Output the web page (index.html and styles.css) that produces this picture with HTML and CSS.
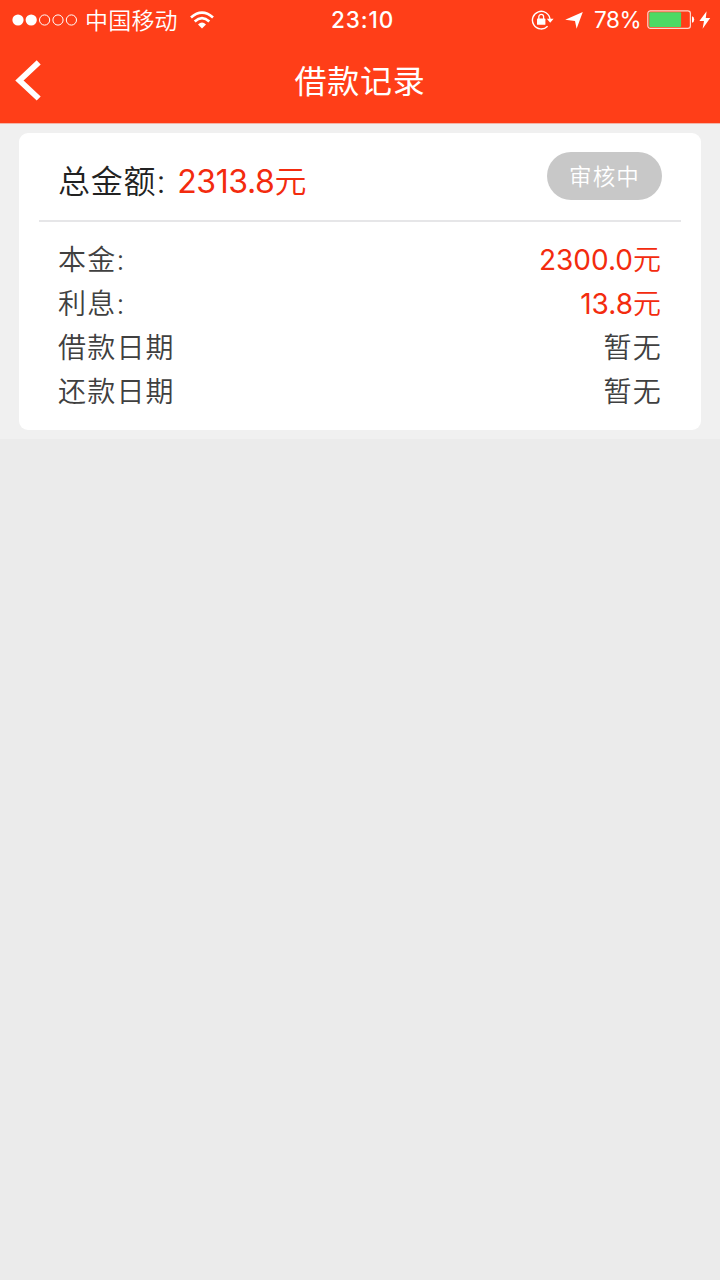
FILE: index.html
```html
<!DOCTYPE html>
<html lang="zh-CN">
<head>
<meta charset="utf-8">
<title>借款记录</title>
<link rel="stylesheet" href="styles.css">
</head>
<body>
<header class="header">
  <div class="status">
    <div class="status-left">
      <svg class="signal" width="66" height="14" viewBox="0 0 66 14">
        <g fill="#fff"><circle cx="6" cy="7" r="5.6"/><circle cx="19.2" cy="7" r="5.6"/></g>
        <g fill="none" stroke="#fff" stroke-width="1"><circle cx="32.6" cy="7" r="5.1"/><circle cx="46" cy="7" r="5.1"/><circle cx="59.4" cy="7" r="5.1"/></g>
      </svg>
      <span class="carrier">中国移动</span>
      <svg class="wifi" width="24" height="18" viewBox="0 0 24 18">
        <g fill="none" stroke="#fff" stroke-width="2.7"><path d="M1 6.4Q12-3.2 23 6.4"/><path d="M4.7 10.4Q12 4 19.3 10.4"/></g>
        <path d="M8 13.4Q12 9.8 16 13.4L12 17.6Z" fill="#fff"/>
      </svg>
    </div>
    <time class="clock">23:10</time>
    <div class="status-right">
      <svg class="lock" width="24" height="20" viewBox="0 0 24 20">
        <path d="M16.6 16.2A8.8 8.8 0 1 1 19 9.3" fill="none" stroke="#fff" stroke-width="1.4"/>
        <path d="M15.8 8.8H22.6L19.2 12.8Z" fill="#fff"/>
        <rect x="6" y="8.6" width="8.4" height="6.2" rx=".6" fill="#fff"/>
        <path d="M7.8 9V6.8a2.4 2.4 0 0 1 4.8 0V9" fill="none" stroke="#fff" stroke-width="1.3"/>
      </svg>
      <svg class="arrow" width="18" height="17" viewBox="0 0 18 17"><path d="M17.8.1L11.6 16.8L10 9L.2 7.8Z" fill="#fff"/></svg>
      <span class="percent">78%</span>
      <svg class="battery" width="48" height="20" viewBox="0 0 48 20">
        <rect x=".8" y=".8" width="42.6" height="17.6" rx="2.6" fill="none" stroke="#ffd5cb" stroke-width="1.2"/>
        <rect x="2.3" y="2.3" width="31.8" height="14.6" rx="1" fill="#4cd964"/>
        <path d="M45 6.3q2.2.4 2.2 3.2t-2.2 3.2Z" fill="#fff"/>
      </svg>
      <svg class="bolt" width="12" height="18" viewBox="0 0 12 18"><path d="M7.6.2L.4 10H5L3.6 17.8L11.2 7H6.8Z" fill="#fff"/></svg>
    </div>
  </div>
  <nav class="navbar">
    <svg class="back" width="28" height="42" viewBox="0 0 28 42"><path d="M24.7 2.3L5.5 20.5L24.7 38.5" fill="none" stroke="#fff" stroke-width="5.8"/></svg>
    <h1 class="title">借款记录</h1>
  </nav>
</header>
<main class="records">
  <section class="card">
    <div class="card-head">
      <span class="total-label">总金额:</span>
      <span class="total-value">2313.8<span class="unit">元</span></span>
      <span class="badge">审核中</span>
    </div>
    <div class="rows">
      <div class="row"><span>本金:</span><span class="money">2300.0<span class="unit">元</span></span></div>
      <div class="row"><span>利息:</span><span class="money">13.8<span class="unit">元</span></span></div>
      <div class="row"><span>借款日期</span><span>暂无</span></div>
      <div class="row"><span>还款日期</span><span>暂无</span></div>
    </div>
  </section>
</main>
</body>
</html>
```

FILE: styles.css
```css
* { box-sizing: border-box; }
body {
  margin: 0;
  min-height: 1280px;
  background: #ebebeb;
  font-family: Inter, "Noto Sans CJK SC", sans-serif;
  color: #404040;
}
svg { display: block; flex: none; }
.header { height: 123px; background: #ff3e18; color: #fff; }
.status {
  display: grid;
  grid-template-columns: 1fr auto 1fr;
  align-items: center;
  height: 40px;
  padding: 0 9px 0 12px;
}
.status-left, .status-right { display: flex; align-items: center; }
.status-right { justify-content: flex-end; }
.carrier { margin: 2px 12px 0 7px; font-size: 23px; line-height: 38px; font-weight: 350; letter-spacing: .2px; }
.wifi { margin-top: -1px; }
.clock { margin: -1px 0 0 2px; font-size: 22.5px; font-weight: 500; letter-spacing: .9px; }
.arrow { margin: 0 11px 0 10px; }
.percent { margin: -1px 6px 0 0; font-size: 22.5px; font-weight: 400; letter-spacing: -.5px; }
.bolt { margin-left: 4px; }
.navbar { display: grid; grid-template-columns: 60px 1fr 60px; align-items: center; height: 82px; }
.back { margin-left: 14px; }
.title { margin: 2px 0 0; text-align: center; font-size: 32px; font-weight: 400; letter-spacing: .8px; line-height: 80px; }
.records { height: 316px; padding: 9px 19px; background: #f0f0f0; border-top: 1px solid #f3b5a8; }
.card { height: 297px; padding: 0 20px; border-radius: 9px; background: #fff; }
.card-head {
  display: flex;
  align-items: center;
  height: 89px;
  padding: 0 19px;
  border-bottom: 2px solid #e6e6e8;
  color: #222;
  font-size: 32px;
  line-height: 48px;
}
.total-label { margin-top: 11px; letter-spacing: .8px; font-weight: 350; }
.total-value { margin: 10px 0 0 11px; color: #f32b0e; letter-spacing: -.4px; font-weight: 400; }
.unit { letter-spacing: 0; font-weight: 350; }
.badge {
  width: 115px;
  height: 48px;
  margin: -1px 0 0 auto;
  border-radius: 24px;
  background: #c8c8c8;
  color: #fff;
  font-size: 22.5px;
  line-height: 49px;
  letter-spacing: 1.2px;
  text-align: center;
  font-weight: 350;
}
.rows { padding: 16px 20px 0 19px; font-size: 28px; font-weight: 350; letter-spacing: 1.2px; }
.row { display: flex; justify-content: space-between; line-height: 44px; height: 44px; }
.row > :last-child { margin-right: -1px; }
.row > .money { margin-right: 0; color: #f32b0e; letter-spacing: 0; font-weight: 400; }
```
